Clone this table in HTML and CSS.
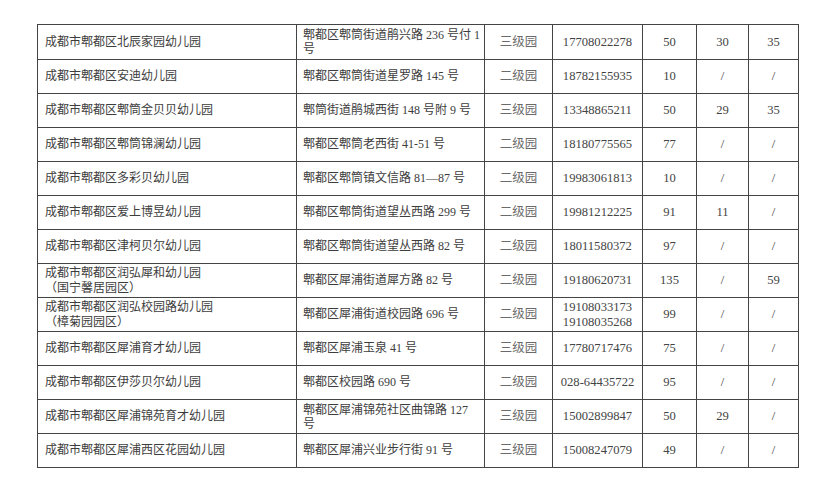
FILE: index.html
```html
<!DOCTYPE html>
<html lang="zh-CN">
<head>
<meta charset="utf-8">
<title>幼儿园名单</title>
<link rel="stylesheet" href="styles.css">
</head>
<body>
<table class="list">
  <colgroup>
    <col class="c-name"><col class="c-addr"><col class="c-level"><col class="c-tel"><col class="c-n1"><col class="c-n2"><col class="c-n3">
  </colgroup>
  <tbody>
    <tr class="first"><td class="name">成都市郫都区北辰家园幼儿园</td><td class="addr two">郫都区郫筒街道鹃兴路 236 号付 1<br>号</td><td class="level">三级园</td><td class="num">17708022278</td><td class="num">50</td><td class="num">30</td><td class="num">35</td></tr>
    <tr><td class="name">成都市郫都区安迪幼儿园</td><td class="addr">郫都区郫筒街道星罗路 145 号</td><td class="level">二级园</td><td class="num">18782155935</td><td class="num">10</td><td class="num">/</td><td class="num">/</td></tr>
    <tr><td class="name">成都市郫都区郫筒金贝贝幼儿园</td><td class="addr">郫筒街道鹃城西街 148 号附 9 号</td><td class="level">三级园</td><td class="num">13348865211</td><td class="num">50</td><td class="num">29</td><td class="num">35</td></tr>
    <tr><td class="name">成都市郫都区郫筒锦澜幼儿园</td><td class="addr">郫都区郫筒老西街 41-51 号</td><td class="level">二级园</td><td class="num">18180775565</td><td class="num">77</td><td class="num">/</td><td class="num">/</td></tr>
    <tr><td class="name">成都市郫都区多彩贝幼儿园</td><td class="addr">郫都区郫筒镇文信路 81—87 号</td><td class="level">二级园</td><td class="num">19983061813</td><td class="num">10</td><td class="num">/</td><td class="num">/</td></tr>
    <tr><td class="name">成都市郫都区爱上博昱幼儿园</td><td class="addr">郫都区郫筒街道望丛西路 299 号</td><td class="level">二级园</td><td class="num">19981212225</td><td class="num">91</td><td class="num">11</td><td class="num">/</td></tr>
    <tr><td class="name">成都市郫都区津柯贝尔幼儿园</td><td class="addr">郫都区郫筒街道望丛西路 82 号</td><td class="level">二级园</td><td class="num">18011580372</td><td class="num">97</td><td class="num">/</td><td class="num">/</td></tr>
    <tr><td class="name two">成都市郫都区润弘犀和幼儿园<br>（国宁馨居园区）</td><td class="addr">郫都区犀浦街道犀方路 82 号</td><td class="level">二级园</td><td class="num">19180620731</td><td class="num">135</td><td class="num">/</td><td class="num">59</td></tr>
    <tr><td class="name two">成都市郫都区润弘校园路幼儿园<br>（樟菊园园区）</td><td class="addr">郫都区犀浦街道校园路 696 号</td><td class="level">二级园</td><td class="num two">19108033173<br>19108035268</td><td class="num">99</td><td class="num">/</td><td class="num">/</td></tr>
    <tr><td class="name">成都市郫都区犀浦育才幼儿园</td><td class="addr">郫都区犀浦玉泉 41 号</td><td class="level">三级园</td><td class="num">17780717476</td><td class="num">75</td><td class="num">/</td><td class="num">/</td></tr>
    <tr><td class="name">成都市郫都区伊莎贝尔幼儿园</td><td class="addr">郫都区校园路 690 号</td><td class="level">二级园</td><td class="num">028-64435722</td><td class="num">95</td><td class="num">/</td><td class="num">/</td></tr>
    <tr><td class="name">成都市郫都区犀浦锦苑育才幼儿园</td><td class="addr two">郫都区犀浦锦苑社区曲锦路 127<br>号</td><td class="level">三级园</td><td class="num">15002899847</td><td class="num">50</td><td class="num">29</td><td class="num">/</td></tr>
    <tr><td class="name">成都市郫都区犀浦西区花园幼儿园</td><td class="addr">郫都区犀浦兴业步行街 91 号</td><td class="level">三级园</td><td class="num">15008247079</td><td class="num">49</td><td class="num">/</td><td class="num">/</td></tr>
  </tbody>
</table>
</body>
</html>
```

FILE: styles.css
```css
html, body {
  margin: 0;
  padding: 0;
  background: #ffffff;
}

body {
  font-family: "Liberation Serif", "Noto Sans CJK SC", serif;
  font-size: 12px;
  color: #3a3a3a;
}

.list {
  margin: 24px 0 0 37px;
  border-collapse: collapse;
  table-layout: fixed;
  width: 762px;
}

.c-name { width: 259px; }
.c-addr { width: 188px; }
.c-level { width: 68px; }
.c-tel { width: 90px; }
.c-n1 { width: 54px; }
.c-n2 { width: 52px; }
.c-n3 { width: 50px; }

.list td {
  border: 1px solid #444;
  height: 33px;
  padding: 0 6px;
  vertical-align: middle;
  line-height: 15px;
  white-space: nowrap;
  overflow: hidden;
}

.list tr.first td {
  height: 34px;
}

.list td.name {
  padding-left: 7px;
  color: #3d3d3d;
}

.list td.addr {
  color: #3d3d3d;
  padding-right: 2px;
}

.list td.addr.two {
  line-height: 14px;
}

.list td.level {
  text-align: center;
  color: #6a6a6a;
  font-size: 12.5px;
}

.list td.num {
  text-align: center;
  color: #444;
  font-size: 12.6px;
}
```
